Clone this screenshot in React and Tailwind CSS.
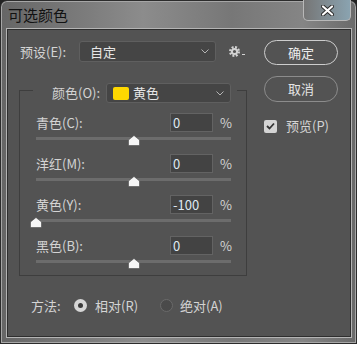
import React from 'react';

const rows = [
  { label: '青色(C):', value: '0', thumb: 'left-[92px]' },
  { label: '洋红(M):', value: '0', thumb: 'left-[92px]' },
  { label: '黄色(Y):', value: '-100', thumb: 'left-[-6px]' },
  { label: '黑色(B):', value: '0', thumb: 'left-[92px]' },
];

const Chevron = () => (
  <svg width="8" height="5" viewBox="0 0 8 5" className="text-[#b4b4b4]">
    <polyline points="0.5,0.5 4,4 7.5,0.5" fill="none" stroke="currentColor" strokeWidth="1" />
  </svg>
);

const Thumb = ({ className }) => (
  <svg width="12" height="11" viewBox="0 0 12 11" className={`absolute top-[-2px] ${className}`}>
    <path d="M6 0.5 L11.5 5 V10.5 H0.5 V5 Z" fill="#f6f6f6" stroke="#3a3a3a" strokeWidth="0.5" strokeLinejoin="round" />
  </svg>
);

const Gear = () => (
  <svg width="17" height="12" viewBox="0 0 17 12" className="text-[#d2d2d2]">
    <circle cx="5.5" cy="5.5" r="4.3" fill="none" stroke="currentColor" strokeWidth="2.4" strokeDasharray="1.9 1.48" />
    <circle cx="5.5" cy="5.5" r="2.6" fill="none" stroke="currentColor" strokeWidth="2" />
    <rect x="13" y="8" width="3" height="1" fill="currentColor" />
  </svg>
);

const Radio = ({ checked }) => (
  <span
    className={`w-[13px] h-[13px] rounded-full flex items-center justify-center ${
      checked ? 'bg-[#d6d6d6]' : 'bg-[#4a4a4a] border border-[#6a6a6a]'
    }`}
  >
    {checked && <span className="w-[5px] h-[5px] rounded-full bg-[#3a3a3a]" />}
  </span>
);

export default function App() {
  return (
    <div className="w-[357px] h-[344px] bg-[#222] font-['Noto_Sans_CJK_SC','Noto_Sans',sans-serif]">
      <div className="relative w-full h-full rounded-t-[7px] border border-[#2c2c2c] bg-[linear-gradient(90deg,#666_0%,#7d7d7d_25%,#8c8c8c_40%,#777_65%,#858585_85%,#6a6a6a_100%)] shadow-[inset_0_0_0_1px_#a6a6a6]">
        {/* title bar */}
        <div className="h-[28px] flex items-start">
          <span className="ml-[7px] mt-[4px] text-[15px] leading-[20px] text-[#121212]">可选颜色</span>
        </div>
        <div className="absolute top-[-1px] right-[5px] w-[48px] h-[21px] rounded-b-[5px] border border-[#b8b8b8] border-t-0 bg-[linear-gradient(90deg,#767676,#8aa3b0)] flex items-center justify-center">
          <svg width="13" height="11" viewBox="0 0 13 11">
            <path d="M2 1.5 L11 9.5 M11 1.5 L2 9.5" stroke="#2a2a2a" strokeWidth="4" strokeLinecap="round" />
            <path d="M2 1.5 L11 9.5 M11 1.5 L2 9.5" stroke="#ffffff" strokeWidth="2.2" strokeLinecap="round" />
          </svg>
        </div>

        {/* panel */}
        <div className="ml-[6px] w-[344px] h-[308px] bg-[#535353] border border-[#2e2e2e] shadow-[0_0_0_1px_#b4b4b4] text-[13px] text-[#d4d4d4] flex">
          {/* left column */}
          <div className="pl-[11px] flex flex-col">
            <div className="mt-[11px] flex items-center h-[21px]">
              <span className="w-[60px] pl-[1px]">预设(E):</span>
              <div className="w-[137px] h-[21px] rounded-[3px] bg-[#454545] border border-[#5f5f5f] flex items-center justify-between pl-[10px] pr-[6px] text-[#e6e6e6]">
                <span>自定</span>
                <Chevron />
              </div>
              <div className="ml-[13px] mt-[1px]">
                <Gear />
              </div>
            </div>

            {/* group box */}
            <div className="mt-[28px] w-[228px] border border-[#3e3e3e] pb-[12px]">
              <div className="-mt-[8px] ml-[13px] w-[204px] h-[20px] bg-[#535353] flex items-center pl-[19px]">
                <span className="w-[54px]">颜色(O):</span>
                <div className="w-[125px] h-[20px] rounded-[3px] bg-[#454545] border border-[#5f5f5f] flex items-center justify-between pl-[6px] pr-[6px] text-[#e6e6e6]">
                  <span className="flex items-center gap-[4px]">
                    <span className="w-[16px] h-[13px] rounded-[2px] bg-[#ffd800]" />
                    黄色
                  </span>
                  <Chevron />
                </div>
              </div>

              <div className="mt-[10px] pl-[16px] flex flex-col gap-[14px]">
                {rows.map((r) => (
                  <div key={r.label}>
                    <div className="h-[19px] flex items-center">
                      <span className="w-[134px]">{r.label}</span>
                      <div className="w-[43px] h-[19px] bg-[#434343] border border-[#636363] pl-[2px] flex items-center text-[#dfe9f2]">
                        {r.value}
                      </div>
                      <span className="ml-[7px]">%</span>
                    </div>
                    <div className="mt-[5px] relative w-[195px] h-[3px] bg-[#6c6c6c]">
                      <Thumb className={r.thumb} />
                    </div>
                  </div>
                ))}
              </div>
            </div>

            {/* method */}
            <div className="mt-[23px] h-[13px] flex items-center pl-[12px]">
              <span className="w-[43px]">方法:</span>
              <Radio checked />
              <span className="ml-[8px] w-[65px]">相对(R)</span>
              <Radio />
              <span className="ml-[7px]">绝对(A)</span>
            </div>
          </div>

          {/* right column */}
          <div className="ml-[17px] mt-[10px] flex flex-col">
            <button className="w-[74px] h-[25px] rounded-full border border-[#cdcdcd] text-[#ededed] flex items-center justify-center">
              确定
            </button>
            <button className="mt-[11px] w-[74px] h-[26px] rounded-full border border-[#8c8c8c] text-[#e4e4e4] flex items-center justify-center">
              取消
            </button>
            <div className="mt-[17px] flex items-center h-[14px]">
              <span className="w-[13px] h-[13px] rounded-[2px] bg-[#d4d4d4] flex items-center justify-center">
                <svg width="9" height="8" viewBox="0 0 9 8">
                  <polyline points="1,4 3.5,6.5 8,1.5" fill="none" stroke="#333" strokeWidth="1.8" />
                </svg>
              </span>
              <span className="ml-[9px]">预览(P)</span>
            </div>
          </div>
        </div>
      </div>
    </div>
  );
}
